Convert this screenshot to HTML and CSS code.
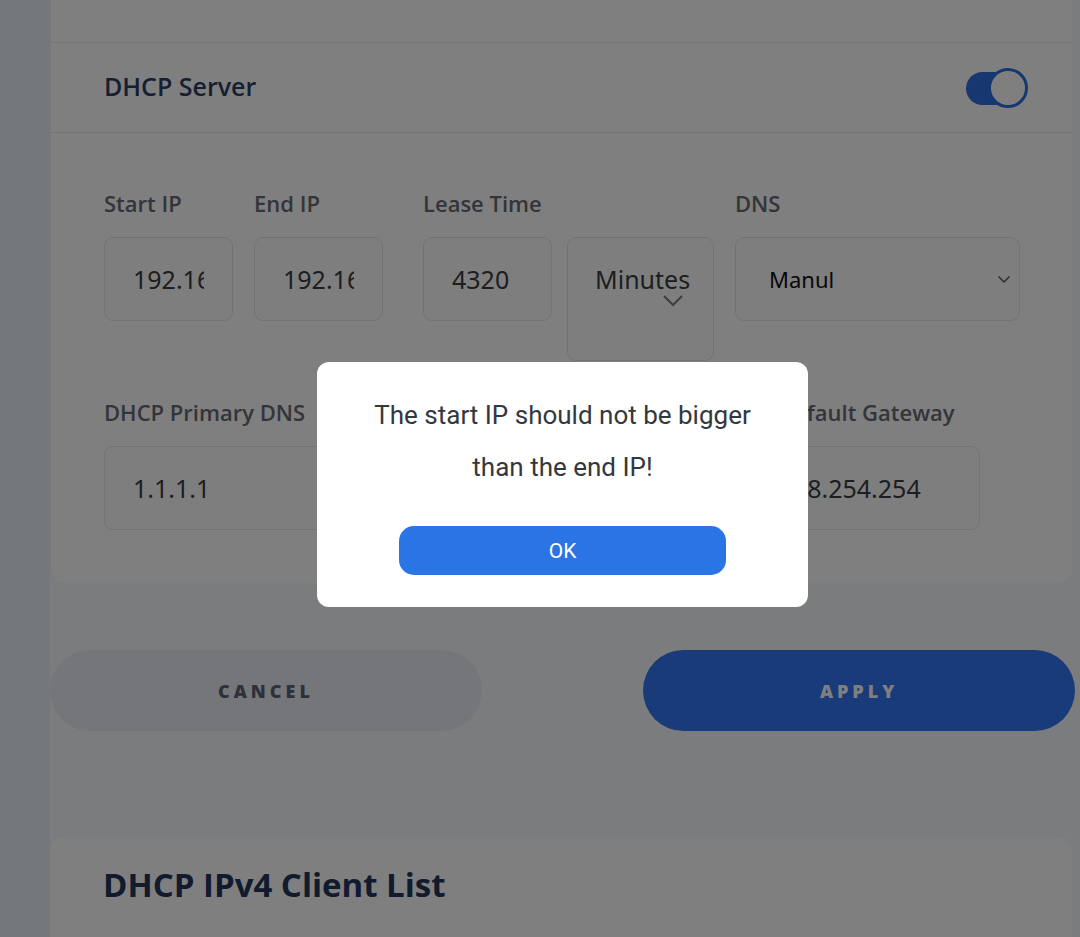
FILE: index.html
```html
<!DOCTYPE html>
<html lang="en">
<head>
  <meta charset="UTF-8" />
  <meta name="viewport" content="width=device-width, initial-scale=1.0"/>
  <title>DHCP Settings</title>
  <link rel="stylesheet" href="styles.css">
</head>
<body>
  <div class="page">
    <section class="card settings">
      <div class="card-top"></div>
      <div class="card-head">
        <h3>DHCP Server</h3>
        <div class="toggle on"><span class="knob"></span></div>
      </div>

      <div class="form">
        <div class="row">
          <div class="field">
            <label>Start IP</label>
            <div class="input w-ip"><span>192.168.1.100</span></div>
          </div>
          <div class="field">
            <label>End IP</label>
            <div class="input w-ip"><span>192.168.1.50</span></div>
          </div>
          <div class="field lease">
            <label>Lease Time</label>
            <div class="pair">
              <div class="input w-ip"><span>4320</span></div>
              <div class="select tall">
                <span>Minutes</span>
                <svg width="22" height="14" viewBox="0 0 22 14"><path d="M2 2l9 9 9-9" fill="none" stroke="#7c7f86" stroke-width="2.2"/></svg>
              </div>
            </div>
          </div>
          <div class="field dns">
            <label>DNS</label>
            <div class="select wide">
              <span>Manul</span>
              <svg width="14" height="9" viewBox="0 0 14 9"><path d="M1.5 1.5l5.5 5.5 5.5-5.5" fill="none" stroke="#555a62" stroke-width="1.5"/></svg>
            </div>
          </div>
        </div>

        <div class="row second">
          <div class="field col">
            <label>DHCP Primary DNS</label>
            <div class="input"><span>1.1.1.1</span></div>
          </div>
          <div class="field col">
            <label>DHCP Secondary DNS</label>
            <div class="input"><span>1.0.0.1</span></div>
          </div>
          <div class="field col">
            <label class="gw">Default Gateway</label>
            <div class="input"><span>192.168.254.254</span></div>
          </div>
        </div>
      </div>
    </section>

    <div class="actions">
      <button class="btn cancel">CANCEL</button>
      <button class="btn apply">APPLY</button>
    </div>

    <section class="card clients">
      <h2>DHCP IPv4 Client List</h2>
    </section>
  </div>

  <div class="overlay">
    <div class="dialog">
      <p>The start IP should not be bigger than the end IP!</p>
      <button class="ok">OK</button>
    </div>
  </div>
</body>
</html>
```

FILE: styles.css
```css
body {
  margin: 0;
  background: #e8eef8;
  font-family: 'Open Sans', 'Noto Sans', sans-serif;
  overflow: hidden;
}

.page {
  margin-left: 50px;
  background: #f6f8fc;
  min-height: 937px;
  padding-right: 8px;
}

.card {
  background: #ffffff;
  width: 1022px;
  box-sizing: border-box;
}

.settings {
  border-radius: 0 0 14px 14px;
  border-left: 1px solid #eef0f4;
}

.card-top {
  height: 42px;
  border-bottom: 1px solid #e9ebef;
}

.card-head {
  height: 90px;
  display: flex;
  align-items: center;
  justify-content: space-between;
  padding: 0 44px 4px 53px;
  box-sizing: border-box;
  border-bottom: 1px solid #e9ebef;
}

.card-head h3 {
  margin: 0;
  font-size: 25px;
  font-weight: 600;
  color: #2c3e62;
}

.toggle {
  width: 62px;
  height: 40px;
  position: relative;
  margin-top: 4px;
}

.toggle::before {
  content: '';
  position: absolute;
  left: 0;
  top: 4px;
  width: 50px;
  height: 33px;
  border-radius: 17px;
  background: #2f6fe2;
}

.toggle .knob {
  position: absolute;
  right: 0;
  top: 0;
  width: 34px;
  height: 34px;
  border-radius: 50%;
  background: #fff;
  border: 3px solid #2f6fe2;
}

.form {
  padding: 58px 0 53px 53px;
}

.row {
  display: flex;
  align-items: flex-start;
}

.row.second {
  margin-top: 39px;
  gap: 28px;
}

.field label {
  display: block;
  font-size: 22px;
  font-weight: 600;
  color: #676b74;
  line-height: 24px;
  margin-bottom: 22px;
}

.field + .field {
  margin-left: 21px;
}

.field.lease {
  margin-left: 40px;
}

.field.dns {
  margin-left: 21px;
}

.row.second .field + .field {
  margin-left: 0;
}

.pair {
  display: flex;
  gap: 15px;
}

.input, .select {
  box-sizing: border-box;
  height: 84px;
  border: 1.5px solid #e3e6ea;
  border-radius: 9px;
  background: #fdfdfe;
  font-family: 'Noto Sans', sans-serif;
  color: #3a3c40;
  overflow: hidden;
  white-space: nowrap;
}

.input {
  display: flex;
  align-items: center;
  padding: 0 28px;
  font-size: 25px;
}

.input span {
  overflow: hidden;
}

.w-ip {
  width: 129px;
}

.col .input {
  width: 270px;
}

.col:last-child .input {
  width: 280px;
}

.gw {
  padding-left: 78px;
}

.select.tall {
  width: 147px;
  height: 124px;
  display: flex;
  flex-direction: column;
  align-items: flex-end;
  padding: 26px 28px 0 27px;
  font-size: 25px;
}

.select.tall span {
  align-self: flex-start;
  line-height: 30px;
}

.select.tall svg {
  margin-right: 1px;
}

.select.wide {
  width: 285px;
  display: flex;
  align-items: center;
  justify-content: space-between;
  padding: 0 8px 0 33px;
  font-size: 22px;
  color: #111;
}

.actions {
  display: flex;
  justify-content: space-between;
  margin-top: 67px;
}

.btn {
  width: 432px;
  height: 81px;
  border: none;
  border-radius: 41px;
  font-family: 'Open Sans', sans-serif;
  font-size: 18px;
  font-weight: 800;
  letter-spacing: 4px;
}

.cancel {
  background: #e9ecf2;
  color: #5c6272;
}

.apply {
  background: #3276f4;
  color: #ffffff;
  margin-right: -3px;
}

.clients {
  margin-top: 106px;
  border-radius: 14px 14px 0 0;
  height: 120px;
  padding: 25px 53px;
}

.clients h2 {
  margin: 0;
  font-size: 33px;
  font-weight: 700;
  color: #24365a;
}

.overlay {
  position: fixed;
  inset: 0;
  background: rgba(0, 0, 0, 0.5);
}

.dialog {
  position: absolute;
  left: 317px;
  top: 362px;
  width: 491px;
  height: 245px;
  box-sizing: border-box;
  background: #fff;
  border-radius: 12px;
  padding: 27px 40px 0;
  text-align: center;
  font-family: Roboto, sans-serif;
}

.dialog p {
  margin: 0 auto;
  max-width: 400px;
  font-size: 26px;
  line-height: 52px;
  color: #333840;
}

.ok {
  margin-top: 33px;
  width: 327px;
  height: 49px;
  border: none;
  border-radius: 15px;
  background: #2b74e6;
  color: #fff;
  font-family: Roboto, sans-serif;
  font-size: 21px;
}
```
